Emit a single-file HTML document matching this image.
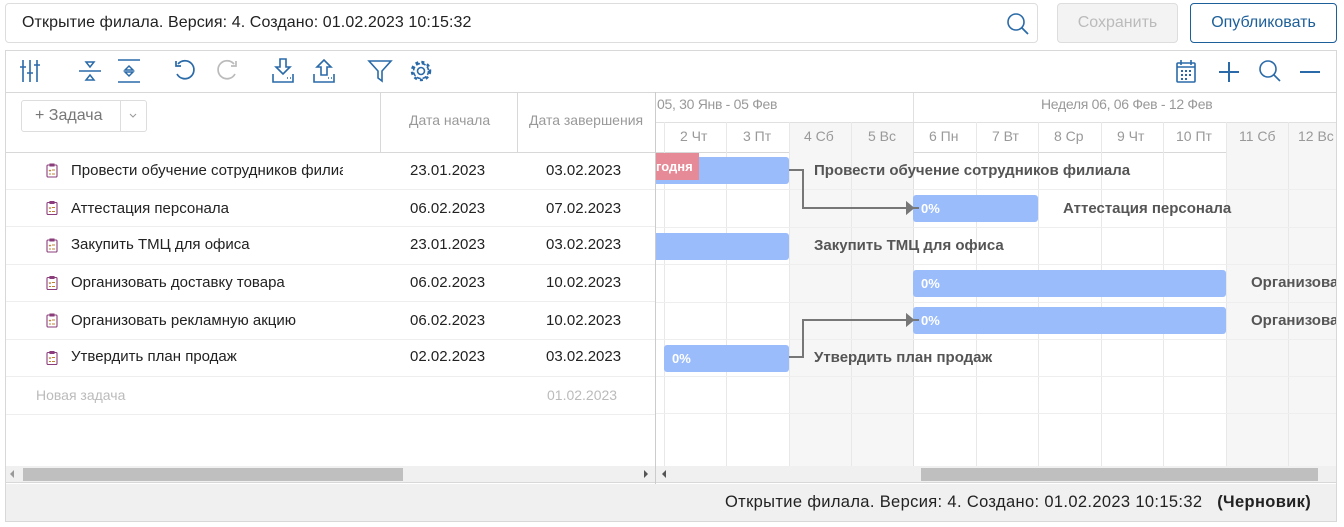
<!DOCTYPE html>
<html><head><meta charset="utf-8"><style>
*{box-sizing:border-box;margin:0;padding:0}
body{width:1344px;height:527px;background:#fff;font-family:"Liberation Sans",sans-serif;position:relative;overflow:hidden;color:#333}
.a{position:absolute}
.t{font-size:15px;color:#222;white-space:nowrap}
.hd{font-size:14px;color:#999;white-space:nowrap}
.vl{position:absolute;width:1px;background:#e8e8e8}
.hl{position:absolute;height:1px;background:#e8e8e8}
.bar{position:absolute;height:27px;background:#9bbcfb;border-radius:3px;color:#fff;font-weight:bold;font-size:13px;line-height:27px;padding-left:8px}
.bl{position:absolute;font-weight:bold;font-size:15px;color:#555;white-space:nowrap}
svg{position:absolute}
</style></head><body>
<!-- top bar -->
<div class="a" style="left:5px;top:3px;width:1033px;height:40px;border:1px solid #ddd;border-radius:4px"></div>
<div class="a t" style="left:22px;top:14px;font-size:16px;letter-spacing:0.1px">Открытие филала. Версия: 4. Создано: 01.02.2023 10:15:32</div>
<svg style="left:1005px;top:11px" width="26" height="26" viewBox="0 0 26 26"><circle cx="11" cy="11" r="8" fill="none" stroke="#2a6aa8" stroke-width="1.6"/><path d="M17 17l6 6" stroke="#2a6aa8" stroke-width="1.8"/></svg>
<div class="a" style="left:1057px;top:3px;width:121px;height:40px;border:1px solid #ddd;border-radius:4px;background:#f3f3f3;color:#bbb;font-size:16px;text-align:center;line-height:38px">Сохранить</div>
<div class="a" style="left:1190px;top:3px;width:147px;height:40px;border:1px solid #1d5f99;border-radius:4px;color:#1d5f99;font-size:16px;text-align:center;line-height:38px">Опубликовать</div>
<!-- main frame -->
<div class="a" style="left:5px;top:50px;width:1332px;height:472px;border:1px solid #d8d8d8"></div>
<div class="hl" style="left:5px;top:92px;width:1332px;background:#d8d8d8"></div>
<!-- toolbar icons -->
<svg style="left:18px;top:58px" width="24" height="26" viewBox="0 0 24 26" fill="none" stroke="#2a6aa8" stroke-width="1.6"><path d="M5 2v22M12 2v22M19 2v22"/><path d="M2 9h6M9 15h6M16 7h6"/></svg>
<svg style="left:78px;top:58px" width="24" height="26" viewBox="0 0 24 26" fill="none" stroke="#2a6aa8" stroke-width="1.5"><path d="M1 13h22"/><path d="M8 4h8l-4 5z M8 22h8l-4-5z"/></svg>
<svg style="left:117px;top:58px" width="24" height="26" viewBox="0 0 24 26" fill="none" stroke="#2a6aa8" stroke-width="1.5"><path d="M1 2h22M1 24h22M8 12l4-4 4 4zM8 14l4 4 4-4z"/></svg>
<svg style="left:172px;top:58px" width="26" height="26" viewBox="0 0 26 26" fill="none" stroke="#2a6aa8" stroke-width="1.7"><path d="M6 6a9 9 0 1 1 -1 10"/><path d="M4 3v5h5"/></svg>
<svg style="left:214px;top:58px" width="26" height="26" viewBox="0 0 26 26" fill="none" stroke="#bbb" stroke-width="1.7"><path d="M20 6a9 9 0 1 0 1 10"/><path d="M22 3v5h-5"/></svg>
<svg style="left:270px;top:57px" width="26" height="28" viewBox="0 0 26 28" fill="none" stroke="#2a6aa8" stroke-width="1.6"><path d="M10 2h6v8h4l-7 7-7-7h4z"/><path d="M3 17v8h20v-8"/><path d="M17 21h1M20 21h1"/></svg>
<svg style="left:311px;top:57px" width="26" height="28" viewBox="0 0 26 28" fill="none" stroke="#2a6aa8" stroke-width="1.6"><path d="M10 18h6v-8h4l-7-7-7 7h4z"/><path d="M3 17v8h20v-8"/><path d="M17 21h1M20 21h1"/></svg>
<svg style="left:367px;top:58px" width="26" height="26" viewBox="0 0 26 26" fill="none" stroke="#2a6aa8" stroke-width="1.6"><path d="M2 3h22l-9 10v10l-4-3v-7z"/></svg>
<svg style="left:409px;top:59px" width="24" height="24" viewBox="0 0 24 24" fill="none" stroke="#2a6aa8" stroke-width="1.6"><circle cx="12" cy="12" r="3.5"/><circle cx="12" cy="12" r="7.5" stroke-dasharray="4 2"/><circle cx="12" cy="12" r="9" stroke-dasharray="3 3.07" stroke-width="2.5"/></svg>
<svg style="left:1175px;top:58px" width="22" height="26" viewBox="0 0 22 26" fill="none" stroke="#2a6aa8" stroke-width="1.6"><rect x="2" y="5" width="18" height="19" rx="1"/><path d="M2 9h18M6 2v5M16 2v5"/><path d="M6 13h2M10 13h2M14 13h2M6 17h2M10 17h2M14 17h2M6 21h2M10 21h2" stroke-width="2"/></svg>
<svg style="left:1217px;top:60px" width="24" height="24" viewBox="0 0 24 24" stroke="#2a6aa8" stroke-width="2"><path d="M12 2v20M2 12h20"/></svg>
<svg style="left:1257px;top:58px" width="26" height="26" viewBox="0 0 26 26" fill="none" stroke="#2a6aa8" stroke-width="1.6"><circle cx="11" cy="11" r="8"/><path d="M17 17l6 6"/></svg>
<svg style="left:1298px;top:60px" width="24" height="24" viewBox="0 0 24 24" stroke="#2a6aa8" stroke-width="2"><path d="M2 12h20"/></svg>
<!-- left grid header -->
<div class="a" style="left:21px;top:100px;width:126px;height:32px;border:1px solid #ddd;border-radius:3px"></div>
<div class="vl" style="left:120px;top:100px;height:32px;background:#ddd"></div>
<div class="a" style="left:35px;top:107px;font-size:16px;color:#777">+ Задача</div>
<svg style="left:128px;top:112px" width="10" height="8" viewBox="0 0 10 8" fill="none" stroke="#999"><path d="M2 2l3 3 3-3"/></svg>
<div class="vl" style="left:380px;top:92px;height:60px;background:#d8d8d8"></div>
<div class="vl" style="left:517px;top:92px;height:60px;background:#d8d8d8"></div>
<div class="a hd" style="left:409px;top:112px">Дата начала</div>
<div class="a hd" style="left:529px;top:112px">Дата завершения</div>
<div class="hl" style="left:5px;top:152px;width:1332px;background:#d8d8d8"></div>
<div class="vl" style="left:655px;top:92px;height:392px;background:#ccc"></div>
<!-- rows left -->
<div class="a" style="left:6px;top:152px;width:649px">
<div style="position:relative;height:37.5px;border-bottom:1px solid #eee"><span class="a t" style="left:65px;top:10px;width:272px;overflow:hidden">Провести обучение сотрудников филиала</span><span class="a t" style="left:404px;top:10px">23.01.2023</span><span class="a t" style="left:540px;top:10px">03.02.2023</span></div>
<div style="position:relative;height:37.5px;border-bottom:1px solid #eee"><span class="a t" style="left:65px;top:10px">Аттестация персонала</span><span class="a t" style="left:404px;top:10px">06.02.2023</span><span class="a t" style="left:540px;top:10px">07.02.2023</span></div>
<div style="position:relative;height:37.5px;border-bottom:1px solid #eee"><span class="a t" style="left:65px;top:9px">Закупить ТМЦ для офиса</span><span class="a t" style="left:404px;top:9px">23.01.2023</span><span class="a t" style="left:540px;top:9px">03.02.2023</span></div>
<div style="position:relative;height:37.5px;border-bottom:1px solid #eee"><span class="a t" style="left:65px;top:9px">Организовать доставку товара</span><span class="a t" style="left:404px;top:9px">06.02.2023</span><span class="a t" style="left:540px;top:9px">10.02.2023</span></div>
<div style="position:relative;height:37.5px;border-bottom:1px solid #eee"><span class="a t" style="left:65px;top:10px">Организовать рекламную акцию</span><span class="a t" style="left:404px;top:10px">06.02.2023</span><span class="a t" style="left:540px;top:10px">10.02.2023</span></div>
<div style="position:relative;height:37.5px;border-bottom:1px solid #eee"><span class="a t" style="left:65px;top:8px">Утвердить план продаж</span><span class="a t" style="left:404px;top:8px">02.02.2023</span><span class="a t" style="left:540px;top:8px">03.02.2023</span></div>
<div style="position:relative;height:37.5px;border-bottom:1px solid #eee"><span class="a t" style="left:30px;top:10px;color:#bbb;font-size:14px">Новая задача</span><span class="a t" style="left:541px;top:10px;color:#bbb;font-size:14px">01.02.2023</span></div>
</div>
<!-- task icons -->
<svg style="left:46px;top:163px" width="12" height="252" viewBox="0 0 12 252" fill="none" stroke="#8a3d7a" stroke-width="1.1">
<g id="ic"><rect x="1" y="2" width="10" height="12" rx="1"/><path d="M4 1h4v2H4z"/><path d="M3 7l1 1 1-1M6 7h3M3 11h2M6 11h3" stroke="#c08030"/></g>
<use href="#ic" y="37.5"/><use href="#ic" y="75"/><use href="#ic" y="112.5"/><use href="#ic" y="150"/><use href="#ic" y="187.5"/>
</svg>
<!-- chart -->
<div class="a" style="left:0;top:0;width:1336px;height:527px;overflow:hidden">
<div class="a" style="left:789px;top:122px;width:124px;height:344px;background:#f6f6f6"></div>
<div class="a" style="left:1226px;top:122px;width:110px;height:344px;background:#f6f6f6"></div>
<div class="hl" style="left:656px;top:122px;width:680px;background:#e0e0e0"></div>
<div class="vl" style="left:913px;top:93px;height:373px;background:#e0e0e0"></div>
<div class="vl" style="left:664px;top:122px;height:344px"></div>
<div class="vl" style="left:726px;top:122px;height:344px"></div>
<div class="vl" style="left:789px;top:122px;height:344px"></div>
<div class="vl" style="left:851px;top:122px;height:344px"></div>
<div class="vl" style="left:976px;top:122px;height:344px"></div>
<div class="vl" style="left:1038px;top:122px;height:344px"></div>
<div class="vl" style="left:1101px;top:122px;height:344px"></div>
<div class="vl" style="left:1163px;top:122px;height:344px"></div>
<div class="vl" style="left:1226px;top:122px;height:344px"></div>
<div class="vl" style="left:1288px;top:122px;height:344px"></div>
<div class="a hd" style="left:657px;top:96px;font-size:14px;letter-spacing:-0.3px">05, 30 Янв - 05 Фев</div>
<div class="a hd" style="left:1041px;top:96px;font-size:14px;letter-spacing:-0.3px">Неделя 06, 06 Фев - 12 Фев</div>
<div class="a hd" style="left:680px;top:128px">2 Чт</div>
<div class="a hd" style="left:743px;top:128px">3 Пт</div>
<div class="a hd" style="left:804px;top:128px">4 Сб</div>
<div class="a hd" style="left:868px;top:128px">5 Вс</div>
<div class="a hd" style="left:929px;top:128px">6 Пн</div>
<div class="a hd" style="left:992px;top:128px">7 Вт</div>
<div class="a hd" style="left:1054px;top:128px">8 Ср</div>
<div class="a hd" style="left:1117px;top:128px">9 Чт</div>
<div class="a hd" style="left:1176px;top:128px">10 Пт</div>
<div class="a hd" style="left:1239px;top:128px">11 Сб</div>
<div class="a hd" style="left:1298px;top:128px">12 Вс</div>
<div class="hl" style="left:656px;top:189px;width:680px;background:#eee"></div>
<div class="hl" style="left:656px;top:227px;width:680px;background:#eee"></div>
<div class="hl" style="left:656px;top:264px;width:680px;background:#eee"></div>
<div class="hl" style="left:656px;top:302px;width:680px;background:#eee"></div>
<div class="hl" style="left:656px;top:339px;width:680px;background:#eee"></div>
<div class="hl" style="left:656px;top:376px;width:680px;background:#eee"></div>
<div class="hl" style="left:656px;top:413px;width:680px;background:#eee"></div>
<div class="bar" style="left:656px;top:157px;width:133px;border-radius:0 3px 3px 0;padding:0"></div>
<div class="a" style="left:656px;top:153px;width:43px;height:27px;background:#e58a96;color:#fff;font-weight:bold;font-size:13px;line-height:27px">годня</div>
<div class="bl" style="left:814px;top:162px">Провести обучение сотрудников филиала</div>
<div class="bar" style="left:913px;top:195px;width:125px">0%</div>
<div class="bl" style="left:1063px;top:200px">Аттестация персонала</div>
<div class="bar" style="left:656px;top:233px;width:133px;border-radius:0 3px 3px 0"></div>
<div class="bl" style="left:814px;top:237px">Закупить ТМЦ для офиса</div>
<div class="bar" style="left:913px;top:270px;width:313px">0%</div>
<div class="bl" style="left:1251px;top:274px">Организовать доставку товара</div>
<div class="bar" style="left:913px;top:307px;width:313px">0%</div>
<div class="bl" style="left:1251px;top:312px">Организовать рекламную акцию</div>
<div class="bar" style="left:664px;top:345px;width:125px">0%</div>
<div class="bl" style="left:814px;top:349px">Утвердить план продаж</div>
<svg style="left:789px;top:165px" width="130" height="200" viewBox="0 0 130 200" fill="none" stroke="#777" stroke-width="2"><path d="M0 5h14v38h116"/><path d="M0 192h14v-37h116"/><path d="M118 38l6 5-6 5z M118 150l6 5-6 5z" fill="#777"/></svg>
</div>
<!-- scrollbars -->
<div class="a" style="left:6px;top:466px;width:1330px;height:17px;background:#f0f0f0;border-bottom:1px solid #d8d8d8"></div>
<div class="vl" style="left:655px;top:466px;height:17px;background:#ccc"></div>
<div class="a" style="left:23px;top:468px;width:380px;height:13px;background:#bfbfbf"></div>
<div class="a" style="left:921px;top:468px;width:397px;height:13px;background:#bfbfbf"></div>
<div class="a" style="left:10px;top:470px;width:0;height:0;border:4px solid transparent;border-right-color:#999;border-left:0"></div>
<div class="a" style="left:644px;top:470px;width:0;height:0;border:4px solid transparent;border-left-color:#555;border-right:0"></div>
<div class="a" style="left:662px;top:470px;width:0;height:0;border:4px solid transparent;border-right-color:#555;border-left:0"></div>
<!-- status -->
<div class="a" style="left:6px;top:484px;width:1330px;height:37px;background:#f0f0f0"></div>
<div class="a t" style="left:725px;top:493px;font-size:16.5px;letter-spacing:0.35px">Открытие филала. Версия: 4. Создано: 01.02.2023 10:15:32 &nbsp;&nbsp;<b>(Черновик)</b></div>
</body></html>
